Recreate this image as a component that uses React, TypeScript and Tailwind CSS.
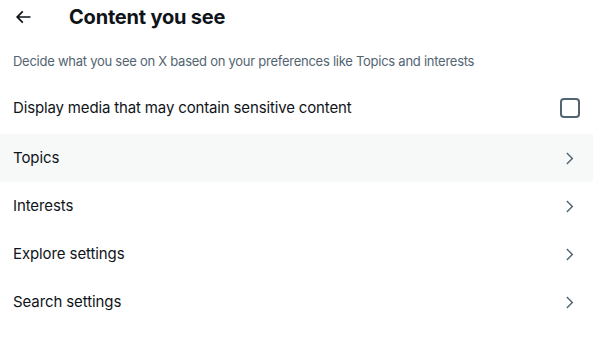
import React from 'react'

const rows = ['Topics', 'Interests', 'Explore settings', 'Search settings']

const Chevron = () => (
  <svg viewBox="0 0 24 24" className="w-[17px] h-[17px] text-[#536471]" fill="currentColor">
    <path d="M14.586 12L7.543 4.96l1.414-1.42L17.414 12l-8.457 8.46-1.414-1.42L14.586 12z" />
  </svg>
)

const SettingRow = ({ label, active }: { label: string; active?: boolean }) => (
  <div className={`flex items-center justify-between h-[48px] pt-[2px] pl-[13px] pr-[15px] ${active ? 'bg-[#f7f9f9]' : ''}`}>
    <span className="text-[15px] text-[#0f1419] tracking-[-0.1px]">{label}</span>
    <Chevron />
  </div>
)

export default function App() {
  return (
    <div className="w-[593px] h-[343px] bg-white overflow-hidden font-['Inter',sans-serif]">
      <div className="flex items-center h-[33px]">
        <div className="w-[69px] flex items-center pl-[13px]">
          <svg viewBox="0 0 24 24" className="w-[20px] h-[20px] text-[#0f1419]" fill="currentColor">
            <path d="M7.414 13l5.043 5.04-1.414 1.42L3.586 12l7.457-7.46 1.414 1.42L7.414 11H21v2H7.414z" />
          </svg>
        </div>
        <h2 className="text-[20px] font-bold text-[#0f1419] tracking-[-0.2px]">Content you see</h2>
      </div>
      <div className="px-[13px] pt-[19px] pb-[11px]">
        <p className="text-[13px] text-[#536471] tracking-[-0.26px]">
          Decide what you see on X based on your preferences like Topics and interests
        </p>
      </div>
      <div className="flex items-center justify-between h-[51px] pl-[13px] pr-[13px]">
        <span className="text-[15px] text-[#0f1419] tracking-[-0.15px]">Display media that may contain sensitive content</span>
        <div className="w-[20px] h-[20px] rounded-[4px] border-2 border-[#536471]" />
      </div>
      {rows.map((r, i) => (
        <SettingRow key={r} label={r} active={i === 0} />
      ))}
    </div>
  )
}
